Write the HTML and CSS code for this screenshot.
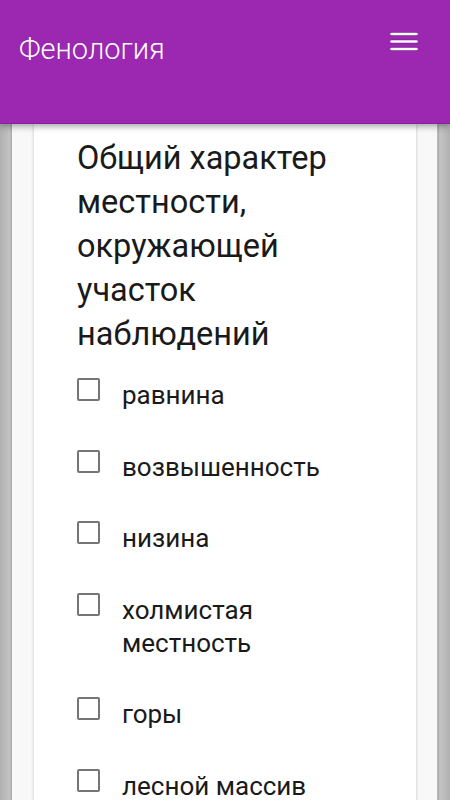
FILE: index.html
```html
<!DOCTYPE html>
<html lang="ru">
<head>
<meta charset="utf-8">
<title>Фенология</title>
<link rel="stylesheet" href="styles.css">
</head>
<body>
<header class="appbar">
  <div class="appbar-title">Фенология</div>
  <button class="menu-btn" aria-label="Меню">
    <svg width="28" height="21" viewBox="0 0 28 21">
      <g stroke="#5e1470" stroke-opacity="0.45" stroke-width="4" stroke-linecap="round">
        <line x1="1.5" y1="2" x2="26.5" y2="2"/>
        <line x1="1.5" y1="9.5" x2="26.5" y2="9.5"/>
        <line x1="1.5" y1="17" x2="26.5" y2="17"/>
      </g>
      <g stroke="#ffffff" stroke-width="2.6" stroke-linecap="round">
        <line x1="1.5" y1="2" x2="26.5" y2="2"/>
        <line x1="1.5" y1="9.5" x2="26.5" y2="9.5"/>
        <line x1="1.5" y1="17" x2="26.5" y2="17"/>
      </g>
    </svg>
  </button>
</header>
<main class="page">
  <div class="sheet">
    <section class="card">
      <h1 class="question">Общий характер местности, окружающей участок наблюдений</h1>
      <ul class="options">
        <li class="option"><span class="box"></span><span class="label">равнина</span></li>
        <li class="option"><span class="box"></span><span class="label">возвышенность</span></li>
        <li class="option"><span class="box"></span><span class="label">низина</span></li>
        <li class="option"><span class="box"></span><span class="label">холмистая местность</span></li>
        <li class="option"><span class="box"></span><span class="label">горы</span></li>
        <li class="option"><span class="box"></span><span class="label">лесной массив</span></li>
      </ul>
    </section>
  </div>
</main>
</body>
</html>
```
FILE: styles.css
```css
html, body {
  margin: 0;
  padding: 0;
  height: 100%;
  overflow: hidden;
}
body {
  background: #b8b8b8;
  font-family: Roboto, "Noto Sans", "Liberation Sans", sans-serif;
  color: #1c1c1c;
}
.appbar {
  position: relative;
  z-index: 2;
  height: 123px;
  background: #9c27b0;
  border-bottom: 1px solid #8a1fa0;
  box-shadow: 0 2px 7px rgba(0, 0, 0, 0.38);
  display: flex;
  justify-content: space-between;
  align-items: flex-start;
  padding: 0 32px 0 19px;
}
.appbar-title {
  padding-top: 31px;
  font-size: 29px;
  line-height: 36px;
  font-weight: 300;
  color: #ffffff;
}
.menu-btn {
  margin-top: 32px;
  padding: 0;
  border: 0;
  background: none;
  width: 28px;
  height: 21px;
  display: block;
}
.menu-btn svg { display: block; }
.page {
  position: relative;
  z-index: 1;
  height: 676px;
  background: linear-gradient(to right, #b0b0b0, #c4c4c4 10px, #a9a9a9 11px, transparent 12px,
    transparent 438px, #a9a9a9 438px, #c4c4c4 440px, #b0b0b0);
  padding: 0 13px 0 12px;
}
.sheet {
  height: 100%;
  background: #f8f8f8;
  padding: 0 21px 0 22px;
}
.card {
  height: 100%;
  background: #ffffff;
  box-shadow: 0 0 3px rgba(0, 0, 0, 0.22);
  padding: 12px 43px 0 43px;
}
.question {
  margin: 0;
  font-size: 32.5px;
  line-height: 44px;
  font-weight: 400;
  color: #1a1a1a;
}
.options {
  list-style: none;
  margin: 23px 0 0 0;
  padding: 0;
  display: flex;
  flex-direction: column;
  gap: 38.5px;
}
.option {
  display: flex;
  align-items: flex-start;
  gap: 22px;
}
.box {
  flex: none;
  box-sizing: border-box;
  width: 23px;
  height: 23px;
  margin-top: -1px;
  border: 2px solid #757575;
  border-radius: 2px;
}
.label {
  font-size: 26px;
  line-height: 33px;
  color: #1a1a1a;
}
```
